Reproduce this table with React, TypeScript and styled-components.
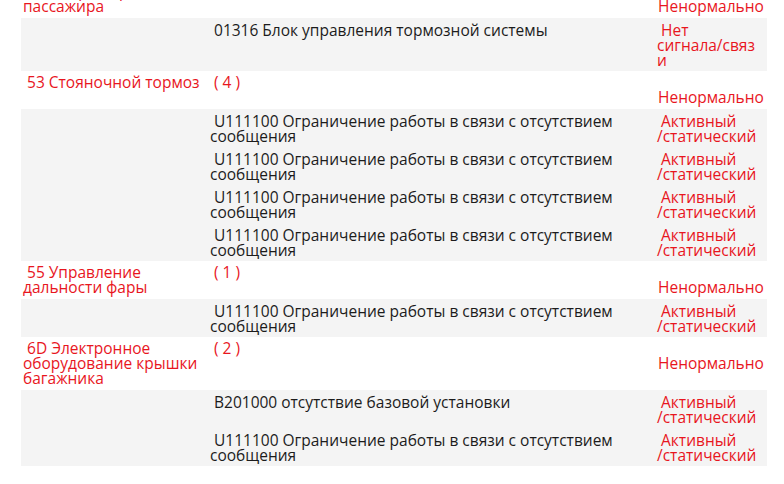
import React from "react";
import styled, { createGlobalStyle } from "styled-components";

const GlobalStyle = createGlobalStyle`
  html, body {
    margin: 0;
    padding: 0;
    background: #ffffff;
    overflow: hidden;
  }
  body {
    font-family: "Open Sans", "Noto Sans", sans-serif;
  }
`;

const RED = "#e8161e";

const Viewport = styled.div`
  width: 784px;
  height: 484px;
  overflow: hidden;
`;

const Table = styled.div`
  margin: -20px 0 0 21px;
  width: 746px;
  font-size: 15.5px;
  line-height: 15px;
`;

const HeaderRow = styled.div`
  display: grid;
  grid-template-columns: 189px 445px 112px;
  background: #ffffff;
  color: ${RED};
`;

const DetailBlock = styled.div`
  background: #f4f4f4;
`;

const DetailRow = styled.div`
  display: grid;
  grid-template-columns: 189px 445px 112px;
  padding: 5px 0 3px;
`;

const NameCell = styled.div`
  padding: 4px 4px 4px 2px;
  white-space: pre-wrap;
`;

const CountCell = styled.div`
  padding: 4px 0 4px 4px;
  white-space: pre-wrap;
`;

const StatusCell = styled.div`
  padding: 19px 0 4px 3px;
`;

const CodeCell = styled.div`
  color: #1c1c1c;
  white-space: pre-wrap;
  padding-right: 20px;
`;

const StateCell = styled.div`
  color: ${RED};
  white-space: pre-wrap;
  overflow-wrap: anywhere;
  padding: 0 6px 0 2px;
`;

interface IFault {
  code: string;
  state: string;
}

interface IGroup {
  name: string;
  count: string;
  faults: IFault[];
}

const ACTIVE = " Активный /\u2060статический";
const U111100 = " U111100 Ограничение работы в связи с отсутствием сообщения";

const groups: IGroup[] = [
  {
    name: " 4B Дверь переднего пассажира",
    count: "( 1 )",
    faults: [
      { code: " 01316 Блок управления тормозной системы", state: " Нет сигнала/\u2060связи" },
    ],
  },
  {
    name: " 53 Стояночной тормоз",
    count: "( 4 )",
    faults: [
      { code: U111100, state: ACTIVE },
      { code: U111100, state: ACTIVE },
      { code: U111100, state: ACTIVE },
      { code: U111100, state: ACTIVE },
    ],
  },
  {
    name: " 55 Управление дальности фары",
    count: "( 1 )",
    faults: [{ code: U111100, state: ACTIVE }],
  },
  {
    name: " 6D Электронное оборудование крышки багажника",
    count: "( 2 )",
    faults: [
      { code: " B201000 отсутствие базовой установки", state: ACTIVE },
      { code: U111100, state: ACTIVE },
    ],
  },
];

export default function App() {
  return (
    <Viewport>
      <GlobalStyle />
      <Table>
        {groups.map((group) => (
          <React.Fragment key={group.name}>
            <HeaderRow>
              <NameCell>{group.name}</NameCell>
              <CountCell>{group.count}</CountCell>
              <StatusCell>Ненормально</StatusCell>
            </HeaderRow>
            <DetailBlock>
              {group.faults.map((fault, j) => (
                <DetailRow key={j}>
                  <div />
                  <CodeCell>{fault.code}</CodeCell>
                  <StateCell>{fault.state}</StateCell>
                </DetailRow>
              ))}
            </DetailBlock>
          </React.Fragment>
        ))}
      </Table>
    </Viewport>
  );
}
